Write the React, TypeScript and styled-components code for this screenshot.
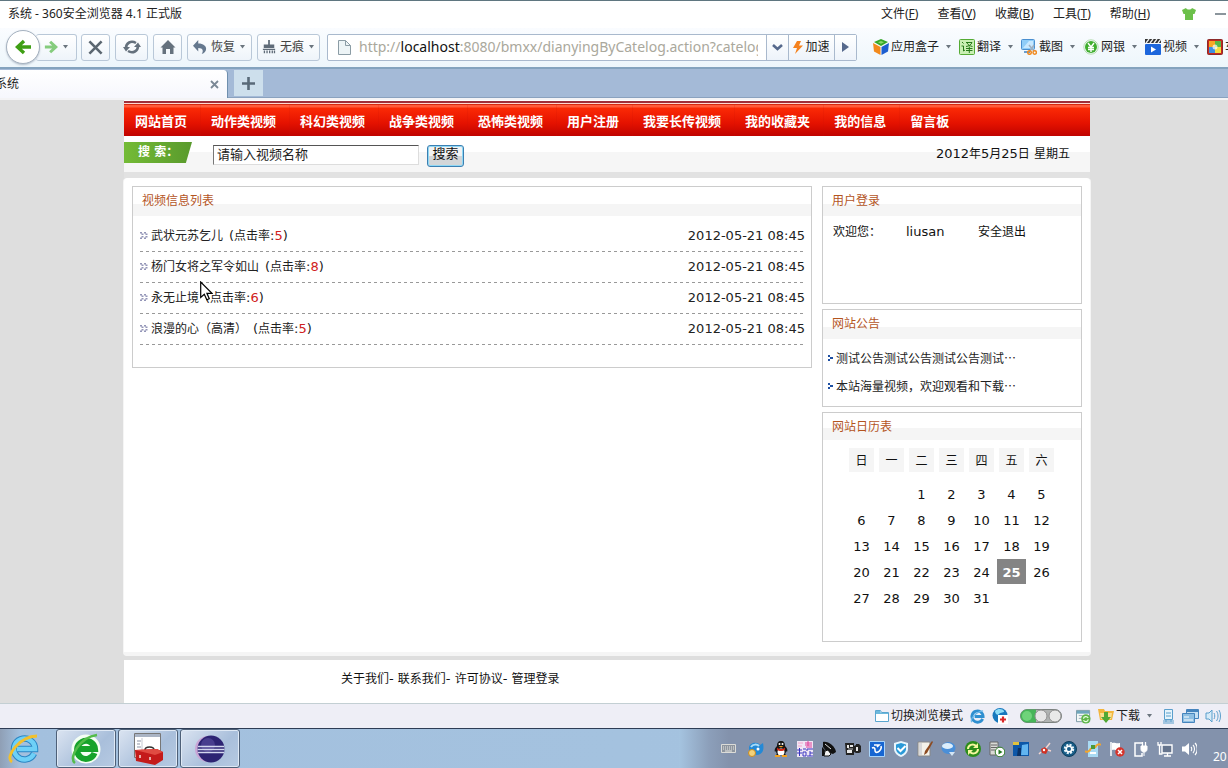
import React from 'react';
import styled, { createGlobalStyle, css } from 'styled-components';

const uiFont = '"Noto Sans", "Noto Sans CJK SC", sans-serif';
const pageFont = '"DejaVu Sans", "Noto Sans CJK SC", sans-serif';

const GlobalStyle = createGlobalStyle`
  * { box-sizing: border-box; }
  body { margin: 0; font: 12px/16px ${uiFont}; color: #222; background: #dedede; }
  button, input { font: inherit; color: inherit; margin: 0; }
  a { color: inherit; text-decoration: none; }
  ul { list-style: none; margin: 0; padding: 0; }
  h2 { margin: 0; font: inherit; }
  svg { display: block; flex: none; }
`;

const Shell = styled.div`
  display: flex;
  flex-direction: column;
  min-height: 100vh;
  overflow: hidden;
`;

/* ---------- browser chrome ---------- */

const TitleBar = styled.header`
  display: flex;
  align-items: center;
  height: 28px;
  padding: 0 0 2px 8px;
  border-top: 1px solid #5f7680;
  background: #fff;
  white-space: nowrap;
  overflow: hidden;
`;
const WindowTitle = styled.span`
  flex: 1;
`;
const MenuBar = styled.nav`
  display: flex;
  gap: 19px;
  padding-right: 32px;
`;
const PlainButton = styled.button`
  display: flex;
  align-items: center;
  gap: 2px;
  padding: 0;
  border: 0;
  background: none;
  white-space: nowrap;
  flex: none;
`;
const WindowButtons = styled.div`
  display: flex;
  align-items: center;
  gap: 19px;
  padding-right: 2px;
`;

const ToolBar = styled.div`
  display: flex;
  align-items: center;
  height: 39px;
  padding: 0 0 1px 6px;
  background: linear-gradient(#fafcff, #edf6fb);
  overflow: hidden;
`;
const ToolButton = styled.button<{ $w: number }>`
  display: flex;
  align-items: center;
  justify-content: center;
  gap: 4px;
  width: ${p => p.$w}px;
  height: 27px;
  margin-right: 5px;
  padding: 0;
  flex: none;
  border: 1px solid #b9c8d8;
  border-radius: 3px;
  background: linear-gradient(#fff, #eef4fa);
  color: #444;
`;
const BackButton = styled.button`
  display: flex;
  align-items: center;
  justify-content: center;
  width: 34px;
  height: 34px;
  padding: 0;
  flex: none;
  border: 1px solid #a6b2c0;
  border-radius: 50%;
  background: #fff;
  box-shadow: 0 1px 2px #b4bfcb;
  z-index: 1;
`;
const ForwardButton = styled(ToolButton)`
  margin-left: -4px;
  margin-right: 4px;
  border-left: 0;
`;
const AddressBar = styled.div`
  display: flex;
  flex: 1;
  min-width: 200px;
  height: 27px;
  margin-left: 2px;
  border: 1px solid #a9b9cd;
  border-radius: 2px;
  background: #fff;
`;
const Address = styled.label`
  display: flex;
  align-items: center;
  flex: 1;
  min-width: 0;
  padding: 0 8px 0 10px;
  font-size: 14px;
  line-height: 20px;
  color: #aaa89c;
`;
const AddressIcon = styled.span`
  margin-right: 8px;
`;
const Host = styled.span`
  color: #111;
`;
const AddressInput = styled.input`
  flex: 1;
  min-width: 0;
  padding: 0;
  border: 0;
  outline: 0;
  background: none;
`;
const AddressButton = styled(PlainButton)<{ $w: number }>`
  justify-content: center;
  width: ${p => p.$w}px;
  border-left: 1px solid #a9b9cd;
  background: linear-gradient(#fff, #edf3fa);
`;
const Shortcuts = styled.div`
  display: flex;
  width: 371px;
  padding-left: 16px;
  flex: none;
  overflow: hidden;
`;
const Shortcut = styled(PlainButton)`
  margin-right: 7px;
`;
const ShortcutLabel = styled.span`
  margin-right: 4px;
`;

const TabStrip = styled.div`
  display: flex;
  align-items: flex-start;
  gap: 6px;
  height: 31px;
  padding-top: 1px;
  border-top: 2px solid #84a3be;
  border-bottom: 1px solid #8aa2bf;
  background: #a4bad7;
`;
const Tab = styled.div`
  display: flex;
  align-items: center;
  justify-content: space-between;
  width: 233px;
  height: 28px;
  margin-left: -5px;
  padding-right: 8px;
  border-right: 1px solid #6f8fae;
  border-radius: 0 4px 0 0;
  background: linear-gradient(#fff, #f6f7fd);
`;
const NewTab = styled(PlainButton)`
  justify-content: center;
  width: 29px;
  height: 26px;
  background: #cddfec;
`;

/* ---------- site ---------- */

const Viewport = styled.main`
  display: flex;
  flex: 1;
  justify-content: center;
  padding-right: 14px;
  border-top: 2px solid #f4f4f6;
  background: #dedede;
  font-family: ${pageFont};
  color: #222;
`;
const Site = styled.div`
  display: flex;
  flex-direction: column;
  flex: 1;
  max-width: 966px;
`;
const SiteNav = styled.nav`
  display: flex;
  height: 36px;
  padding-top: 4px;
  border-top: 1px solid #fff;
  background: linear-gradient(#a02f3a 0 2px, #ffd9d2 2px 3px, #d8290f 3px 4px, #ff5c3c 4px 6px, #fb2a05 7px, #e51200 22px, #c00300 35px);
`;
const NavLink = styled.a`
  padding: 0 13px 0 11px;
  font-size: 13px;
  font-weight: 700;
  line-height: 33px;
  color: #fff;
  white-space: nowrap;
  & + & { box-shadow: inset 1px 0 #c8140826; }
`;
const SearchStrip = styled.form`
  display: flex;
  align-items: flex-start;
  height: 42px;
  padding-right: 20px;
  background: linear-gradient(#fff 0 16px, #f6f6f6 16px 36px, #e2e2e2 36px);
`;
const SearchTag = styled.label`
  width: 68px;
  height: 21px;
  margin: 6px 21px 0 0;
  padding-left: 14px;
  background: linear-gradient(90deg, #74bb36, #599a2c);
  clip-path: polygon(0 0, 100% 0, 91% 100%, 0 100%);
  font-size: 12px;
  font-weight: 700;
  line-height: 21px;
  color: #fff;
  white-space: nowrap;
`;
const SearchInput = styled.input`
  width: 206px;
  height: 20px;
  margin-top: 9px;
  padding: 0 3px 4px;
  border: 1px solid #ddd;
  border-top-color: #555;
  border-left-color: #777;
  background: #fff;
  font-size: 13px;
  line-height: 16px;
`;
const SearchButton = styled.button`
  width: 37px;
  height: 22px;
  margin: 9px auto 0 8px;
  padding: 0 0 4px;
  border: 1px solid #3c7fb1;
  border-radius: 3px;
  box-shadow: inset 0 0 0 1px #8fd8f5;
  background: linear-gradient(#f2f2f2 50%, #d3d6d8 50%);
  font-size: 13px;
  line-height: 16px;
  color: #111;
`;
const Today = styled.time`
  margin-top: 10px;
  color: #111;
`;
const Num = styled.span<{ $hot?: boolean }>`
  font-size: 13px;
  color: ${p => (p.$hot ? '#d02020' : 'inherit')};
`;
const Content = styled.div`
  display: grid;
  grid-template-columns: minmax(0, 1fr) 260px;
  gap: 10px;
  align-items: start;
  flex: 1;
  margin-bottom: 4px;
  padding: 8px 8px 10px;
  border-bottom: 4px solid #f5f5f5;
  border-radius: 4px;
  box-shadow: -1px 0 #f5f5f5, 1px 0 #f5f5f5;
  background: #fff;
`;
const SideColumn = styled.aside`
  display: flex;
  flex-direction: column;
  gap: 5px;
`;
const Panel = styled.section<{ $min?: number }>`
  position: relative;
  min-height: ${p => p.$min ?? 0}px;
  border: 1px solid #ccc;
  background: #fff;
`;
const PanelTitle = styled.h2<{ $short?: boolean }>`
  height: ${p => (p.$short ? 27 : 29)}px;
  padding: 6px 9px 0;
  background: linear-gradient(to top, #f5f5f5 12px, #fff 12px);
  color: #b4551f;
`;
const VideoList = styled.ul`
  padding: 5px 6px 22px 7px;
`;
const VideoRow = styled.li`
  display: flex;
  align-items: center;
  height: 31px;
  padding-bottom: 2px;
  background: repeating-linear-gradient(90deg, #999 0 3px, transparent 3px 6px) 0 100% / 100% 1px no-repeat;
`;
const VideoLink = styled.a`
  margin-left: 3px;
  flex: 1;
`;
const Hits = styled.span`
  margin-left: 6px;
`;
const Pointer = styled.svg`
  position: absolute;
  left: 67px;
  top: 94px;
`;
const LoginRow = styled.div`
  display: grid;
  grid-template-columns: 73px 72px 1fr;
  align-items: center;
  padding: 8px 10px;
  color: #111;
`;
const NoticeList = styled.ul`
  padding: 5px 5px 6px;
  font-family: "Noto Sans CJK SC", sans-serif;
`;
const Notice = styled.li`
  display: flex;
  align-items: center;
  gap: 3px;
  height: 28px;
`;
const Calendar = styled.table`
  margin: 7px 0 0 23px;
  border-spacing: 1px;
  text-align: center;
  table-layout: fixed;
  width: 211px;
  font-size: 13px;
  color: #111;
`;
const WeekDay = styled.th`
  height: 32px;
  padding: 0 2px;
  vertical-align: top;
  font-size: 12px;
  font-weight: 400;
`;
const WeekDayLabel = styled.span`
  display: block;
  height: 24px;
  background: #f5f5f5;
  line-height: 27px;
`;
const Day = styled.td<{ $today: boolean }>`
  height: 25px;
  padding: 2px 0 0;
  ${p => p.$today && css`
    background: #848484;
    color: #fff;
    font-weight: 700;
  `}
`;
const SiteFooter = styled.footer`
  display: flex;
  height: 43px;
  padding: 11px 0 0 217px;
  background: #fff;
  color: #111;
  white-space: pre;
`;

/* ---------- status bar and task bar ---------- */

const StatusBar = styled.div`
  display: flex;
  align-items: center;
  justify-content: flex-end;
  height: 25px;
  border-top: 1px solid #c3cfd3;
  background: #eeeef6;
  overflow: hidden;
`;
const StatusItem = styled(PlainButton)<{ $gap?: number }>`
  margin-right: ${p => p.$gap ?? 7}px;
`;
const TaskBar = styled.footer`
  display: flex;
  align-items: flex-start;
  height: 40px;
  border-top: 1px solid #2d3c55;
  background: linear-gradient(90deg, #8f9fb5, #a3c0de 20px, #a5c4e0);
  overflow: hidden;
`;
const StartIcon = styled(PlainButton)`
  width: 56px;
  height: 39px;
  padding-left: 8px;
`;
const TaskButton = styled.button`
  display: flex;
  align-items: center;
  justify-content: center;
  width: 60px;
  height: 39px;
  margin-right: 2px;
  padding: 0;
  flex: none;
  border: 1px solid #4e6078;
  border-radius: 3px;
  box-shadow: inset 0 0 0 1px #dfe9f5;
  background: linear-gradient(135deg, #dbe4f1, #a9bfdb 60%, #b6cae2);
`;
const Tray = styled.div`
  display: flex;
  align-items: center;
  height: 39px;
  margin-left: auto;
  padding-left: 34px;
  flex: none;
  background: linear-gradient(90deg, #a5c4e0, #8c9fba 30px, #8392ac 50px);
  color: #fff;
`;
const TrayIcon = styled(PlainButton)<{ $w?: number }>`
  justify-content: center;
  width: ${p => p.$w ?? 24}px;
`;
const Clock = styled.time`
  width: 15px;
  margin-left: 12px;
  padding-top: 17px;
`;

/* ---------- drawings ---------- */

const Icon = ({ s = 16, h, box = '0 0 16 16', children }: { s?: number; h?: number; box?: string; children: React.ReactNode }) => (
  <svg width={s} height={h ?? s} viewBox={box} fill="none" aria-hidden="true">{children}</svg>
);
const Caret = () => <Icon s={7} h={4} box="0 0 7 4"><path d="M1 0h5L3.500 3.500z" fill="#6b757e" /></Icon>;
const BlueE = () => (
  <Icon s={15}>
    <path d="M13.500 10.500A6 6 0 1 1 14 8H5" stroke="#2f8fd0" strokeWidth="3" />
    <path d="M2 14C-1 12 6 3 14 2" stroke="#6cb8ea" strokeWidth="1.300" />
  </Icon>
);

const menus: [string, string][] = [['文件', 'F'], ['查看', 'V'], ['收藏', 'B'], ['工具', 'T'], ['帮助', 'H']];

const shortcuts: [string, React.ReactNode][] = [
  ['应用盒子', <Icon><path d="M8 0l7 3-7 4-7-4z" fill="#35a829" /><path d="M0 4l7.500 4v8L1 12.500z" fill="#f28a1c" /><path d="M16 4L8.500 8v8l6.500-3.500z" fill="#1c5ed0" /><path d="M8 2l3 1.300-3 1.500-3-1.500z" fill="#8bd66c" /></Icon>],
  ['翻译', <Icon><rect x=".5" y=".5" width="15" height="15" rx="1" fill="#c9efb4" stroke="#55ab35" /><path d="M3 3l1.500 1.500M2.500 7h2v5l1.500-1M7 3.500h6c-1 2.500-3 3.500-6 4M8 4c1 2 3 3 5.500 3.500M7 9.500h6.500M7 11.500h6.500M10.300 7.500V14" stroke="#27791a" /></Icon>],
  ['截图', <Icon><rect x=".5" y=".5" width="13" height="10" rx="1" fill="#8fcdf8" stroke="#4a8fd0" /><path d="M2 9l6-7 4 0v7z" fill="#c7e8ff" /><path d="M3 13h6" stroke="#6a9fd0" strokeWidth="2" /><path d="M8 6l5 6M13 6l-4 6" stroke="#9fb0c0" strokeWidth="1.500" /><circle cx="8.500" cy="13.500" r="1.800" stroke="#f08a20" strokeWidth="1.500" /><circle cx="13.700" cy="13.500" r="1.700" stroke="#f08a20" strokeWidth="1.500" /></Icon>],
  ['网银', <Icon><circle cx="8" cy="8" r="6" fill="#3fae2e" /><circle cx="8" cy="8" r="7.200" stroke="#b5ddb0" /><path d="M5 4l3 4 3-4M8 8v5M5 8.500h6M5 10.500h6" stroke="#fff" strokeWidth="1.400" /></Icon>],
  ['视频', <Icon><rect y="5" width="16" height="11" rx="1" fill="#1c66dc" /><path d="M0 0h16v4H0z" fill="#333" /><path d="M1 4l3-4M5 4l3-4M9 4l3-4M13 4l3-4" stroke="#eee" strokeWidth="1.300" /><path d="M6 7.500l5 3-5 3z" fill="#fff" /></Icon>],
  ['车险', <Icon><rect x=".5" y=".5" width="15" height="15" rx="1" fill="#c8281e" stroke="#8c2a2a" /><path d="M2 2h6v6H2z" fill="#f7a824" /><path d="M8 2h6v6H8z" fill="#58b947" /><path d="M2 8h6v6H2z" fill="#3d8fe0" /><path d="M8 8h6v6H8z" fill="#f4dc40" /><circle cx="8" cy="8" r="2.500" fill="#fff" opacity=".7" /></Icon>],
];

const navItems = ['网站首页', '动作类视频', '科幻类视频', '战争类视频', '恐怖类视频', '用户注册', '我要长传视频', '我的收藏夹', '我的信息', '留言板'];
const videos: [string, number][] = [['武状元苏乞儿', 5], ['杨门女将之军令如山', 8], ['永无止境', 6], ['浪漫的心（高清）', 5]];
const notices = ['测试公告测试公告测试公告测试⋯', '本站海量视频，欢迎观看和下载⋯'];
const weekDays = ['日', '一', '二', '三', '四', '五', '六'];
const weeks = [0, 1, 2, 3, 4].map(w => weekDays.map((_, d) => w * 7 + d - 1));
const footerLinks = ['关于我们', '联系我们', '许可协议', '管理登录'];

const trayIcons: [string, React.ReactNode][] = [
  ['QQ', <Icon><path d="M8 0c3 0 4 2 4 5 2 2 3 4 2 6l-1-1c0 2-1 3-1 3l2 2H2l2-2s-1-1-1-3l-1 1c-1-2 0-4 2-6 0-3 1-5 4-5z" fill="#151515" /><ellipse cx="8" cy="11" rx="3.500" ry="3.500" fill="#fff" /><path d="M4 6.500c2 2 6 2 8 0v2c-2 2-6 2-8 0z" fill="#d62a1c" /><circle cx="6.500" cy="3" r="1" fill="#fff" /><circle cx="9.500" cy="3" r="1" fill="#fff" /><path d="M5.500 5h5L8 6.500zM2 14h5v2H2zM9 14h5v2H9z" fill="#f0a020" /></Icon>],
  ['搞定', <Icon><path d="M0 0h16v16H0z" fill="#efe6f5" /><path d="M8 2h7M11 0v5M8 4h7M9 6h6" stroke="#e0409a" /><path d="M0 9h5M2.500 7v8M0 12h5M6 8h3M6 11h3v4H6zM10 8h6M10 8v2M13 10v5M10 15h6M13 12h3" stroke="#3a36c0" /><path d="M1 2h5M1 5h4" stroke="#f5a5cc" /></Icon>],
  ['卫星', <Icon><path d="M2 1c5-1 12 4 13 10l-3 2-6-2-4-5z" fill="#111" /><path d="M1 6l3 3-1 6H1z" fill="#111" /><path d="M4 10l3-1 3 4-2 2H3z" fill="#f2f2f2" stroke="#111" /><path d="M4 3l6 5" stroke="#ddd" /></Icon>],
  ['摄像', <Icon><path d="M0 2h9v3l2-1V3h3l2 2v6l-2 1h-3l-2-1v3H1z" fill="#222" /><path d="M2 4h2v3H2zM5 4h3v2H5zM2 9h5v3H2zM11 6h2v4h-2z" fill="#e8e8e8" /><path d="M3 8h5" stroke="#bbb" /></Icon>],
  ['同步', <Icon><path d="M.5.5h15v15H.500z" fill="#1766d2" stroke="#a9d4fa" /><path d="M3 7c2-1 3 0 3 2s1 3 3 2 4-4 3-6M5 4h5l-2 2" stroke="#fff" strokeWidth="1.600" /></Icon>],
  ['安全', <Icon><path d="M8 0l7 2v6c0 4-4 7-7 8-3-1-7-4-7-8V2z" fill="#e8f5fd" /><path d="M8 2l5 1.500V8c0 3-3 5-5 6-2-1-5-3-5-6V3.500z" fill="#2b9ad8" /><path d="M4.500 7l3 3 5-5" stroke="#fff" strokeWidth="2" /></Icon>],
  ['笔记', <Icon><path d="M1 1h12v14H1z" fill="#f4f2ea" stroke="#888" /><path d="M15 0L8 10l-1 4 3-2 6-11z" fill="#8c4a20" /><path d="M2 2h3v12H2z" fill="#d8d8d8" /></Icon>],
  ['气泡', <Icon><ellipse cx="7.500" cy="7" rx="7" ry="6" fill="#4a8fd8" /><ellipse cx="6.500" cy="5" rx="5.500" ry="3" fill="#dceefc" /><path d="M8 11h6l-3 4z" fill="#d5e6f5" /></Icon>],
  ['更新', <Icon><circle cx="8" cy="8" r="8" fill="#2c8d1b" /><path d="M3 8c0-4 5-6 8-3M13 8c0 4-5 6-8 3" stroke="#f6f7a0" strokeWidth="2" /><path d="M13 2v5H8zM3 14V9h5z" fill="#f6f7a0" /></Icon>],
  ['服务器', <Icon><path d="M1 1h8v13H1z" fill="#d9d9d5" stroke="#666" /><path d="M2 4h6M2 6.500h6M2 9h4" stroke="#666" /><circle cx="11" cy="11" r="4.800" fill="#fff" stroke="#2f7a28" /><path d="M9.500 8.500l4 2.500-4 2.500z" fill="#237a1d" /></Icon>],
  ['桌面', <Icon><path d="M0 1h16v14H0z" fill="#0d57a8" /><path d="M0 1h6v3H0z" fill="#e2c33c" /><path d="M9 4l6-1v11H8z" fill="#62b5f0" /><path d="M5 7h3v8H4z" fill="#0a3266" /></Icon>],
  ['录制', <Icon><path d="M4 8l4-2 3 3-2 4-4-1z" fill="#d03225" /><path d="M9 7l4-5M4 11l-2 2M11 9l3 1" stroke="#f4d5d0" strokeWidth="1.500" /><circle cx="7" cy="9" r="1.200" fill="#fff" /></Icon>],
  ['设置', <Icon><circle cx="8" cy="8" r="7.500" fill="#155a85" stroke="#0e3d5c" /><circle cx="8" cy="8" r="4" stroke="#e5f3fa" strokeWidth="2.500" strokeDasharray="2 1.140" /><circle cx="8" cy="8" r="2.800" stroke="#fff" strokeWidth="1.600" /></Icon>],
  ['消息', <Icon><path d="M3 0h10v16H3z" fill="#a9daf3" /><path d="M0 10c2 2 5 0 6-3M16 4c-2-2-5 0-6 3" stroke="#f3a52c" strokeWidth="2" /><path d="M6 4h4v4H6z" fill="#4a9a3c" /><path d="M5 12h6" stroke="#fff" strokeWidth="2" /></Icon>],
  ['操作中心', <Icon><path d="M2 1v14" stroke="#fff" strokeWidth="1.500" /><path d="M3 2c3-1 4 1 8 0v7c-4 1-5-1-8 0z" fill="#fff" /><circle cx="11" cy="11" r="4.700" fill="#d6342c" /><path d="M9 9l4 4M13 9l-4 4" stroke="#fff" strokeWidth="1.500" /></Icon>],
  ['电源', <Icon><path d="M9 2H2v13h7v-3" stroke="#fff" strokeWidth="1.500" /><path d="M8 5h6v3c0 2-1 3-3 3s-3-1-3-3zM11 11v4" fill="#fff" stroke="#fff" /><path d="M9.500 1v4M12.500 1v4" stroke="#fff" strokeWidth="1.300" /></Icon>],
  ['网络', <Icon><path d="M5 4h10v8H5z" fill="#65748d" stroke="#fff" strokeWidth="1.400" /><path d="M7 15h7M10.500 12v3M1 1v3h3V1M2.500 4v9h3" stroke="#fff" strokeWidth="1.300" /></Icon>],
  ['音量', <Icon><path d="M1 5.500h3L8 2v12l-4-3.500H1z" fill="#fff" /><path d="M10 6c1 1 1 3 0 4M12 4c2 2 2 6 0 8M14 2c3 3 3 9 0 12" stroke="#fff" strokeWidth="1.100" /></Icon>],
];

export default function App() {
  return (
    <Shell>
      <GlobalStyle />
      <TitleBar>
        <WindowTitle>系统 - 360安全浏览器 4.1 正式版</WindowTitle>
        <MenuBar>
          {menus.map(([name, key]) => (
            <PlainButton key={key}><span>{name}(<u>{key}</u>)</span></PlainButton>
          ))}
        </MenuBar>
        <WindowButtons>
          <PlainButton aria-label="皮肤">
            <Icon s={14} h={12} box="0 0 14 12"><path d="M4 0c1 2 5 2 6 0l4 2-1.500 4H11v6H3V6H1.500L0 2z" fill="#6cc04a" /></Icon>
          </PlainButton>
          <PlainButton aria-label="最小化">
            <Icon s={11} h={2} box="0 0 11 2"><path d="M0 0h11v2H0z" fill="#8b959c" /></Icon>
          </PlainButton>
        </WindowButtons>
      </TitleBar>

      <ToolBar>
        <BackButton aria-label="后退">
          <Icon s={16}><path d="M9 2L2.500 8 9 14M2.500 8H16" stroke="#3f9f14" strokeWidth="3.400" /></Icon>
        </BackButton>
        <ForwardButton $w={41} aria-label="前进">
          <Icon s={14}><path d="M7 2l6.500 6L7 14M13 8H1" stroke="#85cc7d" strokeWidth="3.400" /></Icon>
          <Caret />
        </ForwardButton>
        <ToolButton $w={29} aria-label="停止">
          <Icon s={15}><path d="M1.500 1.500l13 13M14.500 1.500l-13 13" stroke="#5b6670" strokeWidth="2.800" /></Icon>
        </ToolButton>
        <ToolButton $w={33} aria-label="刷新">
          <Icon s={18} h={16} box="0 0 18 16">
            <path d="M3 9c0-5 5-8 10-5M15 7c0 5-5 8-10 5" stroke="#65717d" strokeWidth="2.600" />
            <path d="M0 8h7l-4 4.500zM18 8h-7l4-4.500z" fill="#65717d" />
          </Icon>
        </ToolButton>
        <ToolButton $w={29} aria-label="主页">
          <Icon><path d="M8 1l7.500 7.500H13.500V15H10v-5H6v5H2.500V8.500H.500z" fill="#65717d" /></Icon>
        </ToolButton>
        <ToolButton $w={65}>
          <Icon s={14}><path d="M6 0v4c6 0 9 3 9 6s-2 5-5 6c2-3 2-7-4-7v4L0 6.500z" fill="#65788e" /></Icon>
          恢复<Caret />
        </ToolButton>
        <ToolButton $w={63}>
          <Icon s={14}><path d="M7 0h2v5h5v4H2V5h5zM1 10h14v1.500H1zM2 12h1.500v3H2zM5 12h1.500v3H5zM8 12h1.500v3H8zM11 12h1.500v3H11zM13.500 12H15v3h-1.500z" fill="#5f6b78" /></Icon>
          无痕<Caret />
        </ToolButton>
        <AddressBar>
          <Address>
            <AddressIcon>
              <Icon s={13} h={15} box="0 0 13 15"><path d="M.5.500h7l5 5v9H.500z" fill="#edf4f6" stroke="#8b9ca5" /><path d="M7.500.500v5h5" stroke="#8b9ca5" /></Icon>
            </AddressIcon>
            http://<Host>localhost</Host>
            <AddressInput aria-label="地址" defaultValue=":8080/bmxx/dianyingByCatelog.action?catelogId=1" />
          </Address>
          <AddressButton $w={22} aria-label="历史地址">
            <Icon s={11} h={7} box="0 0 11 7"><path d="M1 1l4.500 4L10 1" stroke="#56698c" strokeWidth="2.600" /></Icon>
          </AddressButton>
          <AddressButton $w={46}>
            <Icon s={10} h={13} box="0 0 10 13"><path d="M4 0h4L6 4.500h4L2 13l2-6H0z" fill="#f5821e" /></Icon>加速
          </AddressButton>
          <AddressButton $w={22} aria-label="展开">
            <Icon s={7} h={10} box="0 0 7 10"><path d="M0 0l7 5-7 5z" fill="#56698c" /></Icon>
          </AddressButton>
        </AddressBar>
        <Shortcuts>
          {shortcuts.map(([name, icon]) => (
            <Shortcut key={name}>{icon}<ShortcutLabel>{name}</ShortcutLabel><Caret /></Shortcut>
          ))}
        </Shortcuts>
      </ToolBar>

      <TabStrip>
        <Tab>
          系统
          <PlainButton aria-label="关闭标签">
            <Icon s={9} h={9} box="0 0 9 9"><path d="M1 1l7 7M8 1L1 8" stroke="#7b8896" strokeWidth="1.800" /></Icon>
          </PlainButton>
        </Tab>
        <NewTab aria-label="新标签">
          <Icon s={13} h={13} box="0 0 13 13"><path d="M6.500 0v13M0 6.500h13" stroke="#596a78" strokeWidth="2.600" /></Icon>
        </NewTab>
      </TabStrip>

      <Viewport>
        <Site>
          <SiteNav>
            {navItems.map(n => <NavLink href="#" key={n}>{n}</NavLink>)}
          </SiteNav>
          <SearchStrip onSubmit={e => e.preventDefault()}>
            <SearchTag htmlFor="q">搜 索：</SearchTag>
            <SearchInput id="q" defaultValue="请输入视频名称" />
            <SearchButton>搜索</SearchButton>
            <Today>
              <Num>2012</Num>年<Num>5</Num>月<Num>25</Num>日<Num> </Num>星期五
            </Today>
          </SearchStrip>
          <Content>
            <Panel>
              <PanelTitle>视频信息列表</PanelTitle>
              <VideoList>
                {videos.map(([title, hits]) => (
                  <VideoRow key={title}>
                    <Icon s={8} h={7} box="0 0 8 7"><path d="M0 0h2v1.500H0zM1.500 1.500h2v1.500h-2zM1.500 4h2v1.500h-2zM0 5.500h2V7H0zM4 0h2v1.500H4zM5.500 1.500h2v1.500h-2zM5.500 4h2v1.500h-2zM4 5.500h2V7H4z" fill="#9496b8" /></Icon>
                    <VideoLink href="#">
                      {title}
                      <Hits><Num>(</Num>点击率<Num>:</Num><Num $hot>{hits}</Num><Num>)</Num></Hits>
                    </VideoLink>
                    <Num>2012-05-21 08:45</Num>
                  </VideoRow>
                ))}
              </VideoList>
              <Pointer width="13" height="20" viewBox="0 0 13 20" aria-hidden="true">
                <path d="M.7 1v15.500l3.600-3.300 2.500 5.600 2.500-1.100-2.400-5.400H12z" fill="#fff" stroke="#000" strokeWidth="1.200" />
              </Pointer>
            </Panel>
            <SideColumn>
              <Panel $min={118}>
                <PanelTitle>用户登录</PanelTitle>
                <LoginRow><span>欢迎您：</span><Num>liusan</Num><a href="#">安全退出</a></LoginRow>
              </Panel>
              <Panel $min={98}>
                <PanelTitle>网站公告</PanelTitle>
                <NoticeList>
                  {notices.map(n => (
                    <Notice key={n}>
                      <Icon s={5} h={6} box="0 0 5 6"><path d="M0 0h2v2H0zM2 2h3v2H2zM0 4h2v2H0z" fill="#1d4fa2" /></Icon>
                      <a href="#">{n}</a>
                    </Notice>
                  ))}
                </NoticeList>
              </Panel>
              <Panel $min={230}>
                <PanelTitle $short>网站日历表</PanelTitle>
                <Calendar>
                  <thead>
                    <tr>{weekDays.map(d => <WeekDay key={d}><WeekDayLabel>{d}</WeekDayLabel></WeekDay>)}</tr>
                  </thead>
                  <tbody>
                    {weeks.map((week, i) => (
                      <tr key={i}>
                        {week.map(d => <Day key={d} $today={d === 25}>{d > 0 && d < 32 ? d : ''}</Day>)}
                      </tr>
                    ))}
                  </tbody>
                </Calendar>
              </Panel>
            </SideColumn>
          </Content>
          <SiteFooter>
            {footerLinks.map((l, i) => (
              <React.Fragment key={l}>{i > 0 && <Num>- </Num>}<a href="#">{l}</a></React.Fragment>
            ))}
          </SiteFooter>
        </Site>
      </Viewport>

      <StatusBar>
        <StatusItem>
          <Icon s={14} h={12} box="0 0 14 12"><path d="M.5.500h5l1 2h7v9H.500z" fill="#fff" stroke="#5aa6cf" /><path d="M1 1h4l1 2h7v1H1z" fill="#6db9dd" /></Icon>切换浏览模式
        </StatusItem>
        <StatusItem aria-label="IE模式"><BlueE /></StatusItem>
        <StatusItem $gap={12} aria-label="修复">
          <Icon><circle cx="8" cy="7.500" r="7.500" fill="#1878bd" /><path d="M3 3c3-3 8-2 9 0s-4 1-5 3-4 0-4-3z" fill="#8edcf6" /><path d="M6 7h10v9H6z" fill="#fff" /><path d="M11 8.500v6M8 11.500h6" stroke="#d92828" strokeWidth="2.200" /></Icon>
        </StatusItem>
        <StatusItem $gap={14} aria-label="网速">
          <Icon s={42} h={14} box="0 0 42 14"><rect x=".5" y=".5" width="41" height="13" rx="6.500" fill="#b0b3b2" stroke="#7c8380" /><path d="M7 .5h9v13H7A6.500 6.500 0 0 1 7 .500z" fill="#46b558" /><circle cx="7" cy="7" r="5" fill="#6fd37a" /><circle cx="21" cy="7" r="6" fill="#e6e6e6" stroke="#909090" /><circle cx="35" cy="7" r="6" fill="#e9e9e9" stroke="#909090" /></Icon>
        </StatusItem>
        <StatusItem aria-label="刷新页面">
          <Icon s={15}><path d="M.5 1.500h14v12H.500z" fill="#f4f8f6" stroke="#7996a3" /><path d="M1 3.500h13" stroke="#6fa6bd" strokeWidth="3" /><path d="M3 7h4M3 10h3" stroke="#9ab" /><circle cx="10.500" cy="10.500" r="5" fill="#5db548" /><path d="M8 10.500c0-3 4-3 5-1M13 11c0 3-4 3-5 1" stroke="#e8ffe0" strokeWidth="1.300" /></Icon>
        </StatusItem>
        <StatusItem $gap={9}>
          <Icon><path d="M0 1h6l1 2h9l-2 9H2z" fill="#f3b63e" /><path d="M2 5h12l-1 6H3z" fill="#fbdf91" /><path d="M6 4h4v5h3l-5 6-5-6h3z" fill="#52a835" /></Icon>
          <ShortcutLabel>下载</ShortcutLabel><Caret />
        </StatusItem>
        <StatusItem aria-label="页面">
          <Icon s={13} h={15} box="0 0 13 15"><path d="M2.500.500h8v10h-8z" fill="#e5f3fb" stroke="#5b9fcc" /><path d="M4 4h5M4 7h5M1 12h11M1 14h11M4 11v2M9 11v2" stroke="#5b9fcc" /></Icon>
        </StatusItem>
        <StatusItem $gap={6} aria-label="窗口">
          <Icon s={17} h={14} box="0 0 17 14"><path d="M4.500.500h12v9h-12z" fill="#c6e0f3" stroke="#4584bd" /><path d="M5 2h11" stroke="#4584bd" strokeWidth="2" /><path d="M.5 4.500h12v9H.500z" fill="#8ebfe3" stroke="#4584bd" /><path d="M2 8h5M2 11h9" stroke="#fff" /></Icon>
        </StatusItem>
        <StatusItem aria-label="声音">
          <Icon><path d="M1 5h3l3-3v12l-3-3H1z" fill="#d6ebf8" stroke="#5b9fcc" /><path d="M9 5c1 2 1 4 0 6M11.500 3c2 3 2 7 0 10M14 2c2 3 2 9 0 12" stroke="#5b9fcc" /></Icon>
        </StatusItem>
      </StatusBar>

      <TaskBar>
        <StartIcon aria-label="Internet Explorer">
          <Icon s={32} box="0 0 32 32">
            <path d="M26 20.500A10.500 10.500 0 1 1 27 16H9" stroke="#2b86c4" strokeWidth="6.500" />
            <path d="M26 20.500A10.500 10.500 0 1 1 27 16H9" stroke="#6ed0f7" strokeWidth="4.500" />
            <path d="M4 29C-4 24 12 3 29 3" stroke="#f2c02d" strokeWidth="2.800" />
          </Icon>
        </StartIcon>
        <TaskButton aria-label="360安全浏览器">
          <Icon s={32} box="0 0 32 32">
            <circle cx="16" cy="16" r="14.500" fill="#f4fff4" />
            <path d="M24.500 20A9 9 0 1 1 25 16H9" stroke="#16a32b" strokeWidth="6" />
            <path d="M5 30C-2 25 10 4 27 2" stroke="#53bc4a" strokeWidth="2.600" />
          </Icon>
        </TaskButton>
        <TaskButton aria-label="工具箱">
          <Icon s={32} box="0 0 32 32">
            <path d="M2.500.500h26v24h-26z" fill="#fff" stroke="#777" /><path d="M3 2.500h25" stroke="#aab4c4" strokeWidth="3" />
            <path d="M5 8h4M5 11h3M5 14h4" stroke="#8b93a5" /><path d="M10 5v12" stroke="#c5c9d2" />
            <path d="M13 17c0-4 9-4 9 0" stroke="#333" strokeWidth="1.600" />
            <path d="M3 17l22-1 6 3v8l-8 5-19-4z" fill="#c41a1a" /><path d="M3 17l22-1 6 3-8 3z" fill="#e04b42" />
            <path d="M8 22v3M18 24v3" stroke="#f1d5d0" strokeWidth="1.600" />
          </Icon>
        </TaskButton>
        <TaskButton aria-label="Eclipse">
          <Icon s={30} box="0 0 30 30">
            <circle cx="13" cy="15" r="13" fill="#c9a6d6" /><circle cx="16" cy="15" r="13.500" fill="#2d2473" />
            <circle cx="13" cy="11" r="7" fill="#5a50a0" opacity=".6" />
            <path d="M3 12.500h26M2.500 15.500h27M3 18.500h26" stroke="#d3d7ee" strokeWidth="1.300" />
          </Icon>
        </TaskButton>
        <Tray>
          <TrayIcon $w={30} aria-label="键盘">
            <Icon s={15} h={9} box="0 0 15 9"><path d="M.5.500h14v8H.500z" fill="#8f969f" stroke="#dcdcd8" /><path d="M2 3h11M2 5h11" stroke="#e9e9e4" strokeDasharray="1 1" /><path d="M4 7h7" stroke="#e9e9e4" /></Icon>
          </TrayIcon>
          <TrayIcon $w={26} aria-label="旺旺">
            <Icon><path d="M1 7c0-5 8-7 11-3l3-2c1 5 1 12-7 12-5 0-7-3-7-7z" fill="#2489d6" /><path d="M3 6c2-3 6-3 8-1" stroke="#a9dcf8" strokeWidth="2" /><circle cx="4" cy="12" r="3.500" fill="#f3d27a" stroke="#c98a20" /><circle cx="10" cy="8" r="1.500" fill="#fff" /></Icon>
          </TrayIcon>
          {trayIcons.map(([name, icon]) => <TrayIcon key={name} aria-label={name}>{icon}</TrayIcon>)}
          <Clock>20</Clock>
        </Tray>
      </TaskBar>
    </Shell>
  );
}
